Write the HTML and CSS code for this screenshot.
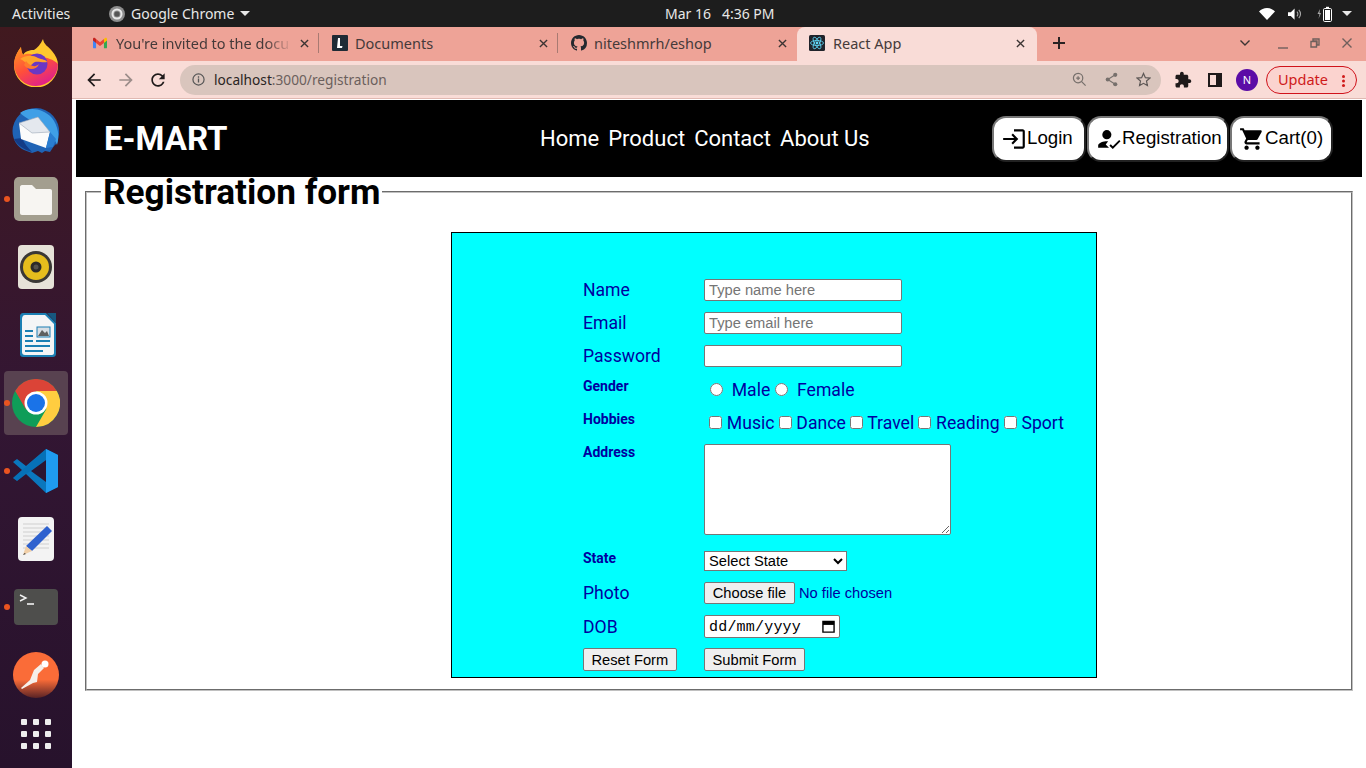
FILE: index.html
```html
<!DOCTYPE html>
<html lang="en-GB">
<head>
    <meta charset="UTF-8">
    <title>React App</title>
    <link rel="stylesheet" href="styles.css">
</head>
<body>
    <div class="topbar">
        <span class="activities">Activities</span>
        <span class="appmenu">
            <svg class="appmenu-icon" viewBox="0 0 16 16"><circle cx="8" cy="8" r="8" fill="#8d8d8d"/><circle cx="8" cy="8" r="4.5" fill="none" stroke="#e8e8e8" stroke-width="2"/><circle cx="8" cy="8" r="2.6" fill="#555"/></svg>
            Google Chrome
            <i class="caret"></i>
        </span>
        <span class="clock">Mar 16&nbsp;&nbsp; 4:36 PM</span>
        <span class="tray">
            <svg class="tray-wifi" viewBox="0 0 16 12"><path d="M0 3.6C2 1.4 5 0 8 0s6 1.4 8 3.6L8 12z" fill="#fff"/></svg>
            <svg class="tray-vol" viewBox="0 0 16 12"><path d="M0 4h3l4-4v12L3 8H0z" fill="#fff"/><path d="M9.5 3.5a3.5 3.5 0 0 1 0 5M11.5 1.5a6.5 6.5 0 0 1 0 9" fill="none" stroke="#aaa" stroke-width="1.2"/></svg>
            <svg class="tray-bat" viewBox="0 0 16 16"><path d="M3 3 0.5 8H2.500L1.500 13 4 7H2.500z" fill="#aaa"/><rect x="6.500" y="2.500" width="8" height="13" rx="1.200" fill="#1d1d1d" stroke="#fff"/><rect x="9" y="0.800" width="3" height="2" fill="#fff"/><rect x="8" y="4" width="5" height="10" fill="#fff"/></svg>
            <i class="caret"></i>
        </span>
    </div>

    <div class="desktop">
        <nav class="dock">
            <div class="dock-item">
                <svg viewBox="0 0 48 48">
                    <defs><linearGradient id="ffBase" x1="0" y1="0" x2="0.6" y2="1"><stop offset="0" stop-color="#ff9a1f"/><stop offset="0.55" stop-color="#ff4f3a"/><stop offset="1" stop-color="#e0218a"/></linearGradient></defs>
                    <path d="M31 0c1 6 5 7 9 12 4 5 6 9 6 14a22 22 0 0 1-44 1C2 19 6 12 9 8c0 3 1 6 2 8 3-5 9-5 11-5 3-2 7-6 9-11z" fill="#ffc72e"/>
                    <path d="M24 47A22 22 0 0 1 2 26c0-7 3-13 7-18 0 3 1 6 2 8 6-3 11 0 15 1 10 2 15 3 20 8a22 22 0 0 1-22 22z" fill="url(#ffBase)"/>
                    <circle cx="25" cy="25" r="10.500" fill="#6b37c4"/>
                    <path d="M8 20c6-4 13-4 18-1 4 2 8 1 9 4-4 1-9-1-12 0-3 1-2 3-6 4-3-3-6-6-9-7z" fill="#ffa52b"/>
                    <path d="M14 22c4 5 9 7 13 3-2 6-11 7-15 1z" fill="#ff7a2e"/>
                </svg>
            </div>
            <div class="dock-item">
                <svg viewBox="0 0 48 48">
                    <path d="M24 1A23.500 23.500 0 0 0 .5 24c0 9 5 16 11.500 19l8 3 6-2 4 2 3-2 5 1 4-6 3-3 2-9A23.500 23.500 0 0 0 24 1z" fill="#1f63b5"/>
                    <path d="M8 6c8-6 22-6 32 5 6 8 8 18 5 27-3-8-8-15-15-19C22 14 14 12 8 6z" fill="#3f9fe6"/>
                    <path d="M2 32c3 6 10 11 18 13-4-4-8-9-10-14z" fill="#133c87"/>
                    <path d="M7 16l31 9-4 16-25-9z" fill="#fbfbfb"/>
                    <path d="M7 16l19-6 12 15-18 1z" fill="#e4e8ee" stroke="#9aa6b5" stroke-width="0.600"/>
                    <path d="M38 25l6 7-3 8-7 1z" fill="#2a7dd0"/>
                </svg>
            </div>
            <div class="dock-item has-dot">
                <svg viewBox="0 0 48 48">
                    <rect x="2" y="2" width="44" height="44" rx="5" fill="#a39e8f"/>
                    <path d="M8 12c0-1 .8-2 2-2h10l4 4h14c1.200 0 2 .9 2 2v22c0 1.200-.8 2-2 2H10c-1.200 0-2-.8-2-2z" fill="#f7f5f2"/>
                </svg>
            </div>
            <div class="dock-item">
                <svg viewBox="0 0 48 48">
                    <rect x="6" y="2" width="36" height="44" rx="4" fill="#e6e2d8"/>
                    <circle cx="24" cy="24" r="16" fill="#3a3835"/>
                    <circle cx="24" cy="24" r="13" fill="#e5bd1d"/>
                    <circle cx="24" cy="24" r="5.500" fill="#2c2a28"/>
                    <circle cx="24" cy="24" r="2.500" fill="#55524d"/>
                </svg>
            </div>
            <div class="dock-item">
                <svg viewBox="0 0 48 48">
                    <path d="M8 5c0-1.500 1-3 3-3h23l10 10v31c0 2-1.500 3-3 3H11c-2 0-3-1-3-3z" fill="#1b7fb3"/>
                    <path d="M10 8c0-2 1-4 3-4h20l9 9v29c0 1-1 2-2 2H13c-2 0-3-1-3-3z" fill="#f4f5f6"/>
                    <path d="M35 2h9v10z" fill="#17587f"/>
                    <path d="M13 19h8v2h-8zM13 24h8v2h-8zM13 29h8v2h-8zM13 34h25v2H13zM13 39h18v2H13zM24 29h14v2H24z" fill="#1b7fb3"/>
                    <rect x="25" y="16" width="13" height="10" fill="#d8dee4" stroke="#1b7fb3"/>
                    <path d="M26 25l4-6 3 3 2-2 2 5z" fill="#5d5f60"/>
                </svg>
            </div>
            <div class="dock-item has-dot active">
                <svg viewBox="0 0 48 48">
                    <circle cx="24" cy="24" r="24" fill="#0f9d58"/>
                    <path d="M44.800 12A24 24 0 0 1 24 48L34.400 30 24 12z" fill="#ffcd40"/>
                    <path d="M44.800 12A24 24 0 0 0 3.200 12L13.600 30 24 12z" fill="#db4437"/>
                    <circle cx="24" cy="24" r="11.500" fill="#fff"/>
                    <circle cx="24" cy="24" r="9" fill="#1a73e8"/>
                </svg>
            </div>
            <div class="dock-item has-dot">
                <svg viewBox="0 0 48 48">
                    <path d="M34 2l12 6v32l-12 6-20-19-9 7-4-3 9-8-9-8 4-3 9 7z" fill="#0a77bd"/>
                    <path d="M34 2l12 6v32l-12 6z" fill="#1f9cf0"/>
                    <path d="M34 13 19 24l15 11z" fill="#2c1530"/>
                    <path d="M34 2v11L14 27l-9 7-4-3z" fill="#0065a9" opacity="0.300"/>
                </svg>
            </div>
            <div class="dock-item">
                <svg viewBox="0 0 48 48">
                    <rect x="6" y="2" width="36" height="44" rx="4" fill="#f3f3f3"/>
                    <path d="M11 9h26M11 13h26M11 17h26M11 21h26M11 25h26M11 29h26M11 33h26" stroke="#cfcfcf"/>
                    <path d="M35 11l5 5-20 20-6-5z" fill="#2f62cf"/>
                    <path d="M14 31l6 5-9 4z" fill="#f0cfa8"/>
                    <path d="M12.500 38l-1.500 2 3-1z" fill="#444"/>
                </svg>
            </div>
            <div class="dock-item has-dot">
                <svg viewBox="0 0 48 48">
                    <rect x="2" y="6" width="44" height="36" rx="4" fill="#4e4e4c"/>
                    <path d="M8 12l6 3-6 3" fill="none" stroke="#f2f2f2" stroke-width="1.400"/>
                    <path d="M15 21h7" stroke="#f2f2f2" stroke-width="1.600"/>
                </svg>
            </div>
            <div class="dock-item">
                <svg viewBox="0 0 48 48">
                    <defs><linearGradient id="pmBase" x1="0" y1="0" x2="0" y2="1"><stop offset="0.600" stop-color="#fa6c38"/><stop offset="1" stop-color="#5a2325"/></linearGradient></defs>
                    <circle cx="24" cy="24" r="23" fill="url(#pmBase)"/>
                    <circle cx="33" cy="13" r="3.500" fill="#fff"/>
                    <path d="M29 13l-7 6-4 10-9 8 1 1 11-6 4-1 1-8 6-6z" fill="#f6efe9"/>
                </svg>
            </div>
            <div class="dock-apps">
                <i></i><i></i><i></i><i></i><i></i><i></i><i></i><i></i><i></i>
            </div>
        </nav>

        <div class="browser">
            <div class="tabstrip">
                <div class="tab">
                    <svg class="tab-icon gmail" viewBox="0 0 16 12"><path d="M0 2v9c0 .6.4 1 1 1h2.500V5.500z" fill="#4285f4"/><path d="M16 2v9c0 .6-.4 1-1 1h-2.500V5.500z" fill="#34a853"/><path d="M12.500 1.500V6L16 3V1.500C16 .3 14.700-.4 13.800.3z" fill="#fbbc04"/><path d="M3.500 6V1.500L8 5l4.500-3.500V6L8 9.300z" fill="#ea4335"/><path d="M0 1.500V3l3.500 3V1.500L2.200.3C1.300-.4 0 .3 0 1.500z" fill="#c5221f"/></svg>
                    <span class="tab-title fade">You're invited to the docu</span>
                    <svg class="tab-close" viewBox="0 0 10 10"><path d="M1 1l8 8M9 1l-8 8"/></svg>
                </div>
                <div class="tab">
                    <svg class="tab-icon" viewBox="0 0 16 16"><rect width="16" height="16" rx="1" fill="#1f2a35"/><path d="M6 3h2v8h2.500L10 13H5z" fill="#fff"/></svg>
                    <span class="tab-title">Documents</span>
                    <svg class="tab-close" viewBox="0 0 10 10"><path d="M1 1l8 8M9 1l-8 8"/></svg>
                </div>
                <div class="tab tab-last">
                    <svg class="tab-icon" viewBox="0 0 16 16"><path fill="#24292f" d="M8 0C3.580 0 0 3.580 0 8c0 3.540 2.290 6.530 5.470 7.590.4.070.55-.17.55-.38 0-.19-.01-.82-.01-1.490-2.010.37-2.530-.49-2.690-.94-.09-.23-.48-.94-.82-1.130-.28-.15-.68-.52-.01-.53.63-.01 1.080.58 1.230.82.72 1.210 1.870.87 2.330.66.070-.52.28-.87.51-1.070-1.780-.2-3.640-.89-3.640-3.950 0-.87.31-1.590.82-2.150-.08-.2-.36-1.020.08-2.120 0 0 .67-.21 2.200.82.64-.18 1.320-.27 2-.27.68 0 1.360.09 2 .27 1.530-1.040 2.200-.82 2.200-.82.44 1.100.16 1.920.08 2.120.51.56.82 1.270.82 2.150 0 3.070-1.870 3.750-3.650 3.950.29.25.54.73.54 1.480 0 1.070-.01 1.930-.01 2.200 0 .21.15.46.55.38A8.013 8.013 0 0016 8c0-4.420-3.580-8-8-8z"/></svg>
                    <span class="tab-title">niteshmrh/eshop</span>
                    <svg class="tab-close" viewBox="0 0 10 10"><path d="M1 1l8 8M9 1l-8 8"/></svg>
                </div>
                <div class="tab tab-active">
                    <svg class="tab-icon" viewBox="0 0 16 16"><rect width="16" height="16" rx="1.500" fill="#20232a"/><g fill="none" stroke="#61dafb" stroke-width="0.800"><ellipse cx="8" cy="8" rx="6.500" ry="2.500"/><ellipse cx="8" cy="8" rx="6.500" ry="2.500" transform="rotate(60 8 8)"/><ellipse cx="8" cy="8" rx="6.500" ry="2.500" transform="rotate(120 8 8)"/></g><circle cx="8" cy="8" r="1.400" fill="#61dafb"/></svg>
                    <span class="tab-title">React App</span>
                    <svg class="tab-close" viewBox="0 0 10 10"><path d="M1 1l8 8M9 1l-8 8"/></svg>
                </div>
                <svg class="tab-new" viewBox="0 0 12 12"><path d="M6 0v12M0 6h12"/></svg>
                <div class="wincontrols">
                    <svg class="win-chevron" viewBox="0 0 10 6"><path d="M.5.5 5 5 9.500.5"/></svg>
                    <svg class="win-min" viewBox="0 0 10 10"><path d="M0 9h10"/></svg>
                    <svg class="win-max" viewBox="0 0 10 10"><path d="M3 1h6v6H7V3H3zM1 3.500h5.500V9H1z"/></svg>
                    <svg class="win-close" viewBox="0 0 10 10"><path d="M.5.5l9 9M9.500.5l-9 9"/></svg>
                </div>
            </div>

            <div class="toolbar">
                <svg class="tool" viewBox="0 0 24 24"><path d="M20 11H7.830l5.590-5.590L12 4l-8 8 8 8 1.410-1.410L7.830 13H20v-2z"/></svg>
                <svg class="tool tool-off" viewBox="0 0 24 24"><path d="M12 4l-1.410 1.410L16.170 11H4v2h12.170l-5.580 5.590L12 20l8-8z"/></svg>
                <svg class="tool" viewBox="0 0 24 24"><path d="M17.650 6.350C16.200 4.900 14.210 4 12 4c-4.420 0-7.990 3.580-7.990 8s3.570 8 7.990 8c3.730 0 6.840-2.550 7.730-6h-2.080c-.82 2.330-3.040 4-5.650 4-3.310 0-6-2.690-6-6s2.690-6 6-6c1.660 0 3.140.69 4.220 1.780L13 11h7V4l-2.350 2.350z"/></svg>
                <div class="omnibox">
                    <svg class="omni-info" viewBox="0 0 14 14"><circle cx="7" cy="7" r="6" fill="none" stroke="#555" stroke-width="1.300"/><path d="M6.300 6h1.400v4.200H6.300zM6.300 3.600h1.400V5H6.300z" fill="#555"/></svg>
                    <span class="url"><b>localhost</b>:3000/registration</span>
                    <svg class="omni-action" viewBox="0 0 16 16"><circle cx="6.500" cy="6.500" r="5" fill="none" stroke="#77706c" stroke-width="1.300"/><path d="M10 10l4.500 4.500M4.500 6.500h4M6.500 4.500v4" stroke="#77706c" stroke-width="1.300"/></svg>
                    <svg class="omni-action" viewBox="0 0 16 16"><circle cx="12" cy="3" r="2.200" fill="#77706c"/><circle cx="4" cy="8" r="2.200" fill="#77706c"/><circle cx="12" cy="13" r="2.200" fill="#77706c"/><path d="M12 3 4 8l8 5" fill="none" stroke="#77706c" stroke-width="1.200"/></svg>
                    <svg class="omni-action" viewBox="0 0 16 16"><path d="M8 1.500l2 4.500 4.800.5-3.600 3.200 1 4.800L8 12.100l-4.200 2.400 1-4.800L1.200 6.500 6 6z" fill="none" stroke="#5f5957" stroke-width="1.300"/></svg>
                </div>
                <svg class="tool tool-ext" viewBox="0 0 24 24"><path d="M20.500 11H19V7c0-1.100-.9-2-2-2h-4V3.500C13 2.120 11.880 1 10.500 1S8 2.120 8 3.500V5H4c-1.100 0-1.990.9-1.990 2v3.800H3.500c1.490 0 2.700 1.210 2.700 2.700s-1.210 2.700-2.700 2.700H2V20c0 1.100.9 2 2 2h3.800v-1.500c0-1.490 1.210-2.700 2.700-2.700 1.490 0 2.700 1.210 2.700 2.700V22H17c1.100 0 2-.9 2-2v-4h1.500c1.380 0 2.500-1.120 2.500-2.500S21.880 11 20.500 11z"/></svg>
                <svg class="tool-side" viewBox="0 0 14 14"><path d="M0 0h14v14H0zM2 2v10h6V2z" fill-rule="evenodd"/></svg>
                <span class="avatar">N</span>
                <span class="update">Update <i class="update-dots"></i></span>
            </div>

            <div class="page">
                <header class="header">
                    <h2 class="brand">E-MART</h2>
                    <ul class="menu">
                        <li>Home</li>
                        <li>Product</li>
                        <li>Contact</li>
                        <li>About Us</li>
                    </ul>
                    <div class="actions">
                        <button type="button" class="action action-login">
                            <svg viewBox="0 0 24 24"><path d="M11 7 9.600 8.400l2.600 2.600H2v2h10.200l-2.600 2.600L11 17l5-5-5-5zm9 12h-8v2h8c1.100 0 2-.9 2-2V5c0-1.100-.9-2-2-2h-8v2h8v14z"/></svg>Login
                        </button>
                        <button type="button" class="action action-reg">
                            <svg viewBox="0 0 24 24"><circle cx="10" cy="8" r="4.200"/><path d="M2 20v-2c0-2.700 5.300-4 8-4l1.200.05L9 17l3 3z"/><path d="M13 17.500l2.500 2.500 6.500-6.500" fill="none" stroke="#000" stroke-width="1.800"/></svg>Registration
                        </button>
                        <button type="button" class="action action-cart">
                            <svg viewBox="0 0 24 24"><path d="M7 18c-1.100 0-1.990.9-1.990 2S5.900 22 7 22s2-.9 2-2-.9-2-2-2zM1 2v2h2l3.600 7.590-1.350 2.450c-.16.28-.25.61-.25.96 0 1.100.9 2 2 2h12v-2H7.420c-.14 0-.25-.11-.25-.25l.03-.12.9-1.630h7.450c.75 0 1.410-.41 1.750-1.030l3.580-6.490c.08-.14.12-.31.12-.48 0-.55-.45-1-1-1H5.210l-.94-2H1zm16 16c-1.100 0-1.990.9-1.990 2s.89 2 1.990 2 2-.9 2-2-.9-2-2-2z"/></svg>Cart(0)
                        </button>
                    </div>
                </header>

                <fieldset class="regbox">
                    <legend class="regtitle">Registration form</legend>
                    <form class="regform">
                        <div class="row">
                            <label for="name">Name</label>
                            <div><input type="text" id="name" class="field" placeholder="Type name here"></div>
                        </div>
                        <div class="row">
                            <label for="email">Email</label>
                            <div><input type="text" id="email" class="field" placeholder="Type email here"></div>
                        </div>
                        <div class="row">
                            <label for="password">Password</label>
                            <div><input type="password" id="password" class="field"></div>
                        </div>
                        <div class="row row-gap">
                            <label class="small">Gender</label>
                            <div class="choices">
                                <input type="radio" name="gender" class="radio"> &nbsp;Male<input type="radio" name="gender" class="radio"> &nbsp;Female
                            </div>
                        </div>
                        <div class="row">
                            <label class="small">Hobbies</label>
                            <div class="choices">
                                <input type="checkbox" class="check"> Music<input type="checkbox" class="check"> Dance<input type="checkbox" class="check"> Travel<input type="checkbox" class="check"> Reading<input type="checkbox" class="check"> Sport
                            </div>
                        </div>
                        <div class="row row-address">
                            <label class="small" for="address">Address</label>
                            <div><textarea id="address" class="address"></textarea></div>
                        </div>
                        <div class="row">
                            <label class="small small-state" for="state">State</label>
                            <div>
                                <select id="state" class="state">
                                    <option>Select State</option>
                                </select>
                            </div>
                        </div>
                        <div class="row">
                            <label>Photo</label>
                            <div class="photo">
                                <button type="button" class="formbtn choose">Choose file</button>
                                <span class="nofile">No file chosen</span>
                            </div>
                        </div>
                        <div class="row row-gap">
                            <label>DOB</label>
                            <div class="dob">
                                <span class="dob-text">dd/mm/yyyy</span>
                                <svg class="dob-icon" viewBox="0 0 14 14"><path d="M1 1.500h12v2.800H1zM1 2.500h12V13H1z" fill="none" stroke="#000" stroke-width="1.500"/><path d="M1 2h12v3H1z"/></svg>
                            </div>
                        </div>
                        <div class="row">
                            <div><button type="reset" class="formbtn">Reset Form</button></div>
                            <div><button type="button" class="formbtn">Submit Form</button></div>
                        </div>
                    </form>
                </fieldset>
            </div>
        </div>
    </div>
</body>
</html>
```

FILE: styles.css
```css
* {
    box-sizing: border-box;
}

html, body {
    margin: 0;
    height: 768px;
    overflow: hidden;
}

body {
    display: flex;
    flex-direction: column;
    font-family: "Roboto", sans-serif;
    background-color: #fff;
}

/* ubuntu top bar */
.topbar {
    height: 27px;
    flex: none;
    display: flex;
    align-items: center;
    background-color: #1d1d1d;
    color: #e8e8e8;
    font-family: "Noto Sans", sans-serif;
    font-size: 14px;
    padding-left: 12px;
}

.activities {
    width: 97px;
}

.appmenu {
    display: flex;
    align-items: center;
    gap: 6px;
    width: 556px;
}

.appmenu-icon {
    width: 16px;
    height: 16px;
}

.caret {
    display: block;
    width: 0;
    height: 0;
    border-left: 5px solid transparent;
    border-right: 5px solid transparent;
    border-top: 5px solid #e8e8e8;
}

.clock {
    width: 594px;
    white-space: nowrap;
}

.tray {
    display: flex;
    align-items: center;
}

.tray-wifi {
    width: 16px;
    height: 12px;
    margin-right: 13px;
}

.tray-vol {
    width: 15px;
    height: 12px;
    margin-right: 14px;
}

.tray-bat {
    width: 16px;
    height: 16px;
    margin-right: 9px;
}

.desktop {
    flex: 1;
    display: flex;
    min-height: 0;
}

/* launcher */
.dock {
    width: 72px;
    flex: none;
    display: flex;
    flex-direction: column;
    align-items: center;
    gap: 4px;
    padding-top: 4px;
    background: linear-gradient(180deg, #41191f 0%, #331633 50%, #27122c 100%);
}

.dock-item {
    width: 64px;
    height: 64px;
    display: flex;
    align-items: center;
    justify-content: center;
    border-radius: 4px;
    position: relative;
}

.dock-item svg {
    width: 48px;
    height: 48px;
}

.dock-item.active {
    background-color: #584250;
}

.has-dot::before {
    content: "";
    position: absolute;
    left: 0;
    top: 29px;
    width: 6px;
    height: 6px;
    border-radius: 50%;
    background-color: #e95420;
}

.dock-apps {
    display: grid;
    grid-template-columns: repeat(3, 6px);
    gap: 6px;
    padding-top: 8px;
}

.dock-apps i {
    display: block;
    width: 6px;
    height: 6px;
    border-radius: 1px;
    background-color: #eee;
}

/* chrome window */
.browser {
    flex: 1;
    min-width: 0;
    display: flex;
    flex-direction: column;
}

.tabstrip {
    height: 34px;
    flex: none;
    display: flex;
    align-items: center;
    background-color: #eea397;
    padding-left: 8px;
    font-family: "Noto Sans", sans-serif;
    font-size: 14.5px;
    color: #453a3a;
}

.tab {
    width: 239px;
    height: 34px;
    display: flex;
    align-items: center;
    padding-left: 13px;
    padding-bottom: 2px;
    position: relative;
}

.tab::after {
    content: "";
    position: absolute;
    right: 0;
    top: 6px;
    height: 20px;
    width: 1px;
    background-color: #a87a72;
}

.tab-last::after, .tab-active::after {
    display: none;
}

.tab-active {
    width: 240px;
    background-color: #f9dcd7;
    border-radius: 8px 8px 0 0;
    padding-left: 12px;
}

.tab-icon {
    width: 16px;
    height: 16px;
    flex: none;
}

.gmail {
    height: 12px;
    width: 14px;
    margin-right: 2px;
}

.tab-title {
    margin-left: 7px;
    width: 176px;
    white-space: nowrap;
    overflow: hidden;
}

.tab-active .tab-title {
    margin-left: 8px;
    width: 175px;
}

.fade {
    -webkit-mask-image: linear-gradient(90deg, #000 85%, transparent 100%);
    mask-image: linear-gradient(90deg, #000 85%, transparent 100%);
}

.tab-close {
    width: 9px;
    height: 9px;
    margin-left: 8px;
    flex: none;
    fill: none;
    stroke: #3c3433;
    stroke-width: 1.500;
}

.tab-new {
    width: 12px;
    height: 12px;
    margin-left: 16px;
    margin-bottom: 2px;
    fill: none;
    stroke: #2a2222;
    stroke-width: 2;
}

.wincontrols {
    display: flex;
    align-items: center;
    margin-left: 175px;
    margin-bottom: 2px;
}

.win-chevron {
    width: 10px;
    height: 6px;
    stroke: #3c3433;
    stroke-width: 1.400;
    fill: none;
}

.win-min, .win-max, .win-close {
    width: 10px;
    height: 10px;
    fill: none;
    stroke: #6f5f5c;
    stroke-width: 1.400;
}

.win-min {
    margin-left: 28px;
    margin-top: 2px;
}

.win-max, .win-close {
    margin-left: 22px;
}

.toolbar {
    height: 38px;
    flex: none;
    display: flex;
    align-items: center;
    background-color: #f9dcd7;
    border-bottom: 1px solid #e0b9b2;
    padding-left: 12px;
}

.tool {
    width: 20px;
    height: 20px;
    fill: #1f1a1a;
    margin-right: 12px;
    flex: none;
}

.tool-off {
    fill: #9c8d8a;
}

.omnibox {
    width: 981px;
    height: 30px;
    margin-right: 13px;
    flex: none;
    display: flex;
    align-items: center;
    background-color: #d9c5bd;
    border-radius: 15px;
    padding-left: 12px;
    font-family: "Noto Sans", sans-serif;
    font-size: 13.7px;
}

.omni-info {
    width: 13px;
    height: 13px;
    flex: none;
}

.url {
    margin-left: 9px;
    color: #6b5f5c;
    flex: 1;
}

.url b {
    font-weight: 400;
    color: #2a2423;
}

.omni-action {
    width: 15px;
    height: 15px;
    margin-right: 17px;
    flex: none;
}

.omni-action:last-child {
    margin-right: 10px;
}

.tool-ext {
    width: 18px;
    height: 18px;
    margin-right: 16px;
}

.tool-side {
    width: 14px;
    height: 14px;
    fill: #1f1a1a;
    margin-right: 14px;
    flex: none;
}

.avatar {
    width: 22px;
    height: 22px;
    flex: none;
    border-radius: 50%;
    background-color: #5b0ca6;
    color: #fff;
    font-family: "Noto Sans", sans-serif;
    font-size: 11px;
    display: flex;
    align-items: center;
    justify-content: center;
    margin-right: 8px;
}

.update {
    width: 91px;
    height: 28px;
    flex: none;
    display: flex;
    align-items: center;
    border: 1px solid #d0121b;
    border-radius: 14px;
    background-color: #fbd3cf;
    color: #cf1a1a;
    font-family: "Noto Sans", sans-serif;
    font-size: 14.5px;
    padding: 0 0 2px 11px;
    position: relative;
}

.update-dots {
    position: absolute;
    right: 11px;
    top: 8px;
    width: 3px;
    height: 3px;
    border-radius: 50%;
    background-color: #cf1a1a;
    box-shadow: 0 4.500px 0 #cf1a1a, 0 9px 0 #cf1a1a;
}

/* the app itself */
.page {
    flex: 1;
    min-height: 0;
    padding: 1px 4px 0;
    background-color: #fff;
}

.header {
    height: 77px;
    display: flex;
    align-items: center;
    background-color: #000;
    color: #fff;
    padding-left: 28px;
}

.brand {
    margin: 0;
    width: 436px;
    font-size: 33px;
    font-weight: 700;
}

.menu {
    list-style: none;
    margin: 0;
    padding: 0;
    display: flex;
    gap: 9px;
    font-size: 22px;
    width: 452px;
}

.actions {
    display: flex;
    gap: 1px;
}

.action {
    height: 46px;
    display: flex;
    align-items: center;
    padding: 0 6px 2px 7px;
    background-color: #fff;
    color: #000;
    border: 2px outset #777;
    border-radius: 14px;
    font-family: "Liberation Sans", sans-serif;
    font-size: 18.7px;
}

.action svg {
    width: 26px;
    height: 26px;
    flex: none;
    margin-top: 2px;
}

.action-login {
    width: 94px;
}

.action-reg {
    width: 142px;
}

.action-cart {
    width: 103px;
}

.regbox {
    margin: 0 9px;
    padding: 0;
    height: 514px;
    border: 2px groove #c0c0c0;
    min-width: 0;
}

.regtitle {
    margin-left: 14px;
    padding: 0 2px;
    font-size: 35.2px;
    font-weight: 700;
    line-height: 30px;
    color: #000;
}

.regform {
    width: 646px;
    height: 446px;
    margin: 25px 0 0 364px;
    padding: 40px 0 0 131px;
    background-color: #0ff;
    border: 1px solid #000;
    color: #0000a0;
    font-size: 17.6px;
}

.row {
    display: grid;
    grid-template-columns: 121px 1fr;
    min-height: 33px;
    align-items: center;
    white-space: nowrap;
}

.row-gap {
    margin-top: 1px;
}

.row-address {
    height: 104px;
    align-items: start;
    padding-top: 5px;
}

.small {
    align-self: start;
    padding-top: 5px;
    font-size: 14px;
    font-weight: 700;
}

.row-address .small {
    padding-top: 0;
}

.small-state {
    padding-top: 7px;
}

.choices {
    padding-left: 1px;
}

.radio {
    margin-right: 0;
}

.check {
    margin: 3px 0.5px 3px 4px;
}

.field {
    display: block;
    width: 198px;
    height: 22px;
    padding: 1px 4px;
    border: 1px solid #767676;
    border-radius: 2px;
    font-family: "Liberation Sans", sans-serif;
    font-size: 14.7px;
}

.address {
    display: block;
    width: 247px;
    height: 91px;
    border: 1px solid #767676;
    border-radius: 2px;
}

.state {
    display: block;
    width: 143px;
    height: 20px;
    margin-top: 2px;
    font-family: "Liberation Sans", sans-serif;
    font-size: 14.7px;
    background-color: #fff;
}

.photo {
    display: flex;
    align-items: center;
    gap: 4px;
    font-family: "Liberation Sans", sans-serif;
    font-size: 14.7px;
}

.dob {
    display: flex;
    align-items: center;
    justify-content: space-between;
    width: 136px;
    height: 23px;
    padding: 1px 4px 0 4px;
    border: 1px solid #767676;
    border-radius: 2px;
    background-color: #fff;
    color: #000;
    font-family: "Liberation Mono", monospace;
    font-size: 15px;
    letter-spacing: 0.2px;
}

.dob-icon {
    width: 13px;
    height: 13px;
    flex: none;
    margin-bottom: 2px;
}

.formbtn {
    height: 23px;
    padding: 1px 7.5px;
    border: 1px solid #767676;
    border-radius: 2px;
    background-color: #efefef;
    font-family: "Liberation Sans", sans-serif;
    font-size: 14.7px;
}

.choose {
    height: 22px;
    width: 91px;
    padding: 0;
}
```
